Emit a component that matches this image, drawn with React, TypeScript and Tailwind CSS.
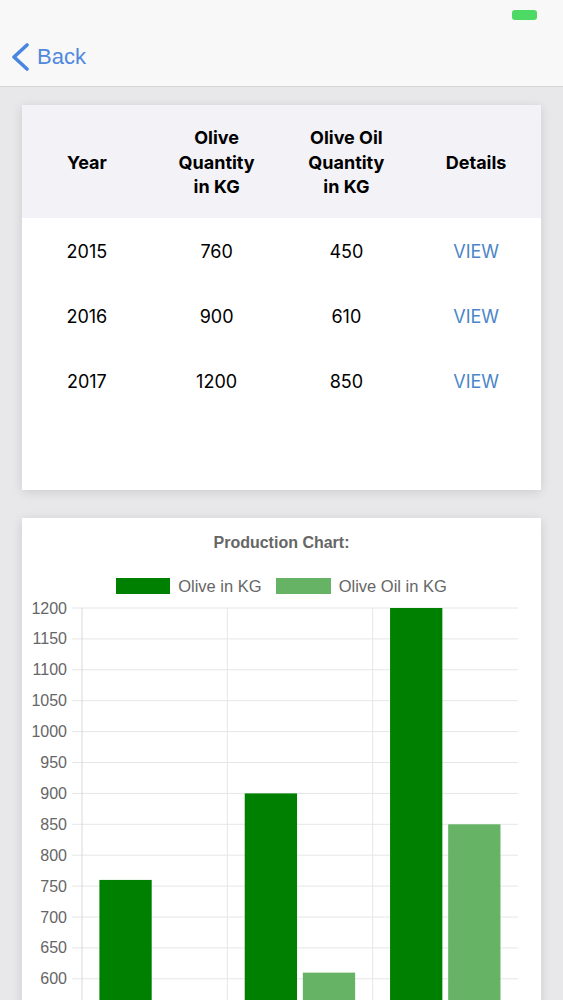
import React from "react";

const rows = [
  { year: "2015", olive: 760, oil: 450 },
  { year: "2016", olive: 900, oil: 610 },
  { year: "2017", olive: 1200, oil: 850 },
];

const ticks = [1200, 1150, 1100, 1050, 1000, 950, 900, 850, 800, 750, 700, 650, 600, 550];

// svg sits at page y=606, card left=22
const OFF_Y = 606;
const OFF_X = 22;
const yFor = (v: number) => 608 + (1200 - v) * 0.618 - OFF_Y;
const CAT_W = (518 - 82) / 3;

const ProductionChart = () => {
  const plotLeft = 82 - OFF_X;
  const plotRight = 518 - OFF_X;
  const bottom = yFor(500);
  return (
    <svg width={519} height={420} className="block overflow-visible">
      {ticks.map((t) => (
        <g key={t}>
          <line x1={50} x2={plotRight} y1={yFor(t)} y2={yFor(t)} stroke="#e6e6e6" strokeWidth={1} />
          {t >= 600 && (
            <text
              x={45}
              y={yFor(t) + 5.5}
              textAnchor="end"
              fontSize={16}
              fill="#666"
              fontFamily='"Liberation Sans", Arial, sans-serif'
            >
              {t}
            </text>
          )}
        </g>
      ))}
      <line x1={plotLeft} x2={plotLeft} y1={yFor(1200)} y2={bottom} stroke="#d9d9d9" />
      <line x1={plotLeft + CAT_W} x2={plotLeft + CAT_W} y1={yFor(1200)} y2={bottom} stroke="#e6e6e6" />
      <line x1={plotLeft + CAT_W * 2} x2={plotLeft + CAT_W * 2} y1={yFor(1200)} y2={bottom} stroke="#e6e6e6" />
      {rows.map((r, i) => {
        const start = plotLeft + i * CAT_W;
        return (
          <g key={r.year}>
            <rect x={start + 17.4} y={yFor(r.olive)} width={52.3} height={bottom - yFor(r.olive)} fill="#008000" />
            <rect x={start + 75.5} y={yFor(r.oil)} width={52.3} height={bottom - yFor(r.oil)} fill="#66b366" />
          </g>
        );
      })}
    </svg>
  );
};

export default function App() {
  return (
    <div className="h-[1000px] overflow-hidden bg-[#e8e8eb] font-['Inter',sans-serif]">
      {/* status + nav bar */}
      <div className="h-[87px] bg-[#f8f8f9] border-b border-[#d6d6d8] flex flex-col">
        <div className="h-[30px] flex justify-end items-start pt-[10px] pr-[26px]">
          <div className="w-[25px] h-[10px] rounded-[3px] bg-[#4cd964]" />
        </div>
        <div className="flex items-center pl-[11px] pt-[13px] gap-[8px] text-[#4f88dc]">
          <svg width="18" height="28" viewBox="0 0 18 28">
            <path d="M16 2 L3 14 L16 26" fill="none" stroke="#4a86e0" strokeWidth="3.6" strokeLinecap="round" strokeLinejoin="round" />
          </svg>
          <span className="text-[22px] leading-none font-['Liberation_Sans',Arial,sans-serif]">Back</span>
        </div>
      </div>

      <div className="px-[22px] pt-[18px] flex flex-col gap-[28px]">
        {/* table card */}
        <div className="bg-white shadow-[0_2px_10px_rgba(0,0,0,0.12)]">
          <div className="grid grid-cols-4 h-[113px] pt-[3px] items-center bg-[#f2f2f7] text-[18px] leading-[24.5px] font-bold text-black text-center">
            <div>Year</div>
            <div>
              Olive
              <br />
              Quantity
              <br />
              in KG
            </div>
            <div>
              Olive Oil
              <br />
              Quantity
              <br />
              in KG
            </div>
            <div>Details</div>
          </div>
          <div className="pt-[1px] pb-[76px]">
            {rows.map((r) => (
              <div key={r.year} className="grid grid-cols-4 h-[65px] items-center text-center text-[18px] text-black">
                <div>{r.year}</div>
                <div>{r.olive}</div>
                <div>{r.oil}</div>
                <div className="text-[#4a86c8]">VIEW</div>
              </div>
            ))}
          </div>
        </div>

        {/* chart card */}
        <div className="bg-white shadow-[0_2px_10px_rgba(0,0,0,0.12)] font-['Liberation_Sans',Arial,sans-serif]">
          <div className="h-[48px] pt-[2px] flex items-center justify-center text-[16px] font-bold text-[#666]">
            Production Chart:
          </div>
          <div className="h-[40px] flex justify-center items-center gap-[14px] text-[16.5px] text-[#666]">
            <div className="flex items-center gap-[8px]">
              <div className="w-[54px] h-[16px] bg-[#008000]" />
              <span>Olive in KG</span>
            </div>
            <div className="flex items-center gap-[8px]">
              <div className="w-[55px] h-[16px] bg-[#66b366]" />
              <span>Olive Oil in KG</span>
            </div>
          </div>
          <ProductionChart />
        </div>
      </div>
    </div>
  );
}
